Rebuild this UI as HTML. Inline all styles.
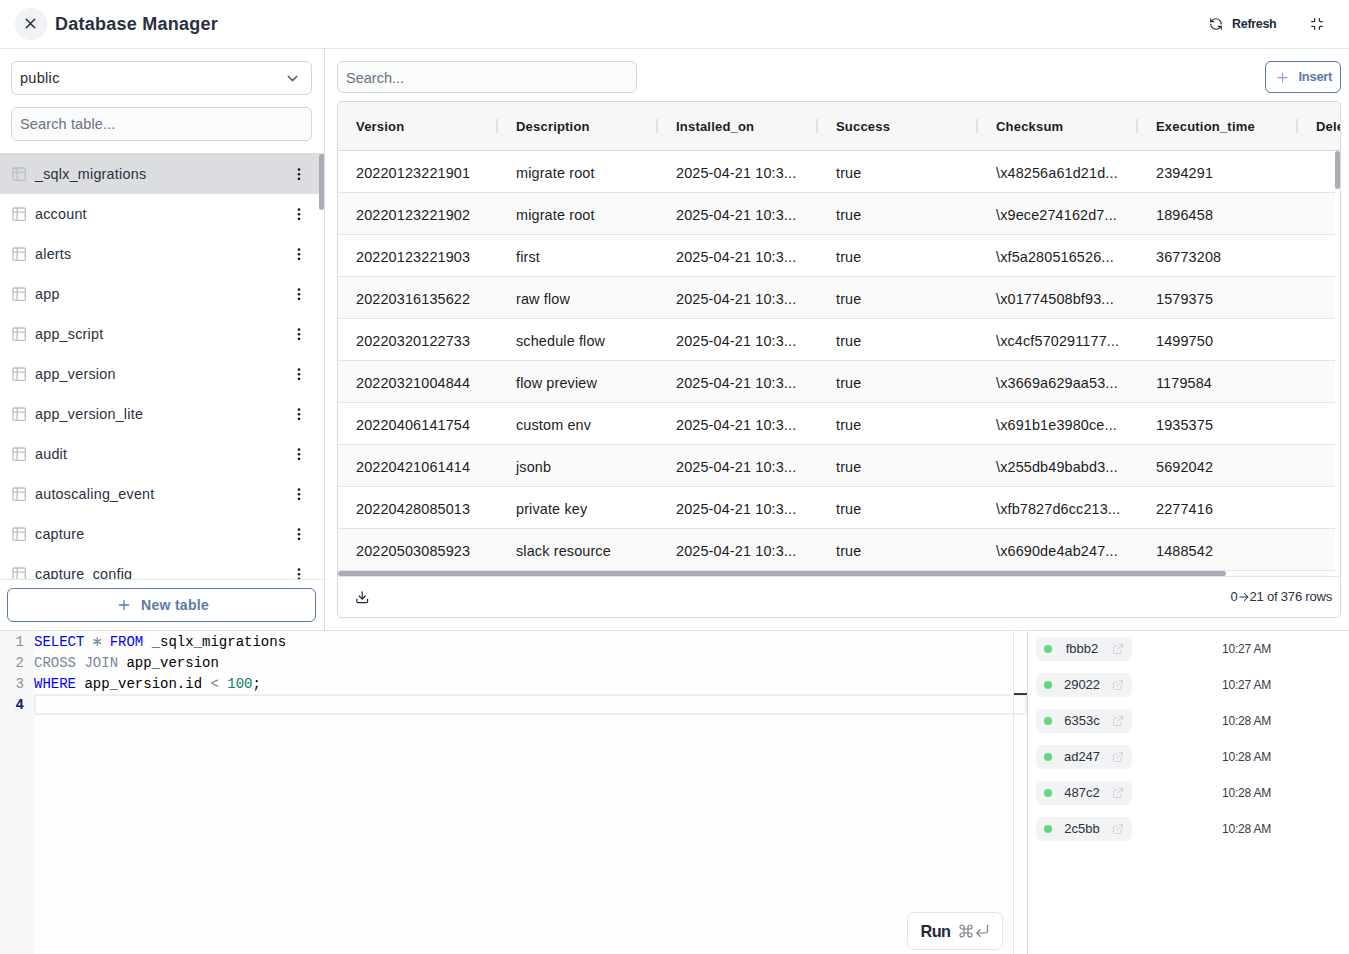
<!DOCTYPE html>
<html><head><meta charset="utf-8">
<style>
*{box-sizing:border-box;margin:0;padding:0}
html,body{width:1349px;height:954px;overflow:hidden;background:#fff;font-family:"Liberation Sans",sans-serif;color:#1f2937}
.a{position:absolute}
svg{display:block}
/* header */
#hdr{left:0;top:0;width:1349px;height:49px;border-bottom:1px solid #e4e6eb;background:#fff}
#close{left:15px;top:8px;width:32px;height:32px;border-radius:50%;background:#f1f2f4}
#title{left:55px;top:13px;font-size:18px;font-weight:bold;color:#283041;line-height:22px;white-space:nowrap;letter-spacing:0.25px}
#refresh{left:1232px;top:16px;font-size:12.5px;font-weight:bold;color:#222a3a;line-height:16px;letter-spacing:-0.3px}
/* sidebar */
#side{left:0;top:49px;width:325px;height:581px;border-right:1px solid #dcdcdc;background:#fff}
.inp{border:1px solid #d3d6dd;border-radius:6px;background:#fff}
#sel{left:11px;top:61px;width:301px;height:34px}
#selt{left:20px;top:69px;font-size:14.5px;color:#1f2937;line-height:18px;letter-spacing:0.3px}
#srch{left:11px;top:107px;width:301px;height:34px;background:#fafbfb}
#srcht{left:20px;top:115px;font-size:14.5px;color:#6b7280;line-height:18px;letter-spacing:0.13px}
.row{left:0;width:324px;height:40px}
.row .ic{position:absolute;left:11px;top:12.7px}
.row .nm{position:absolute;left:35px;top:12px;font-size:14.3px;color:#283041;line-height:18px;white-space:nowrap;letter-spacing:0.25px}
.row .kb{position:absolute;left:297px;top:15px}
#list{left:0;top:153px;width:324px;height:426px;overflow:hidden}
#listb{left:0;top:579px;width:324px;height:1px;background:#e5e7eb}
#newt{left:7px;top:588px;width:309px;height:34px;border:1px solid #5d79a8;border-radius:6px}
#newtt{left:118px;top:596px;font-size:14px;font-weight:bold;color:#5f7aa8;line-height:18px;white-space:nowrap;letter-spacing:0.3px}
/* main */
#tsrch{left:337px;top:61px;width:300px;height:32px;background:#fafbfb}
#tsrcht{left:346px;top:69px;font-size:14.5px;color:#6b7280;line-height:18px}
#ins{left:1265px;top:61px;width:76px;height:32px;border:1px solid #5d79a8;border-radius:6px}
#inst{left:1298.5px;top:69px;font-size:13px;font-weight:bold;color:#5f7aa8;line-height:16px;letter-spacing:-0.3px}
#tbl{left:337px;top:101px;width:1004px;height:517px;border:1px solid #d5d8df;border-radius:5px;overflow:hidden;background:#fff}
#thead{left:0;top:0;width:1004px;height:49px;background:#f7f7f8;border-bottom:1px solid #d5d8df}
.th{position:absolute;top:17px;font-size:13px;font-weight:bold;color:#1a1d23;line-height:16px;white-space:nowrap;letter-spacing:0.2px}
.sep{position:absolute;top:17px;width:2px;height:14px;background:#dde1ea}
.tr{position:absolute;left:0;width:997px;height:42px;border-bottom:1px solid #e1e4eb}
.tr.alt{background:#fafafa}
.td{position:absolute;top:13px;font-size:14.4px;color:#1a1d23;line-height:18px;white-space:nowrap;letter-spacing:0.15px}
/* bottom */
#bot{left:0;top:630px;width:1349px;height:1px;background:#e1e1e1}
#edit{left:0;top:631px;width:1027px;height:323px;background:#fefefe}
#gut{left:0;top:631px;width:34px;height:323px;background:#f7f8fa}
.ln{position:absolute;left:0;width:24px;text-align:right;font-family:"Liberation Mono",monospace;font-size:14px;line-height:21px;color:#999}
.code{position:absolute;left:34px;font-family:"Liberation Mono",monospace;font-size:14px;line-height:21px;color:#000;white-space:pre}
.kw{color:#0000ff}.g{color:#778899}.num{color:#098658}
#jobs{left:1028px;top:631px;width:321px;height:323px;background:#fff}
.pill{position:absolute;left:1036px;width:96px;height:24px;border-radius:7px;background:#f2f3f5}
.dot{position:absolute;left:8px;top:8px;width:8px;height:8px;border-radius:50%;background:#66d680}
.pt{position:absolute;left:16px;width:60px;text-align:center;top:4px;font-size:13px;color:#2a3140;line-height:16px}
.ext{position:absolute;left:76.2px;top:6px}
.tm{position:absolute;left:1222px;font-size:12px;color:#353c4a;line-height:16px;white-space:nowrap;letter-spacing:-0.2px}
</style></head><body>
<div id="hdr" class="a"></div>
<div id="close" class="a"><svg class="a" style="left:7.3px;top:7px" width="17" height="17" viewBox="0 0 24 24" fill="none" stroke="#222a3a" stroke-width="2" stroke-linecap="round"><path d="M18 6 6 18M6 6l12 12"/></svg></div>
<div id="title" class="a">Database Manager</div>
<svg class="a" style="left:1209px;top:17px" width="14" height="14" viewBox="0 0 24 24" fill="none" stroke="#222a3a" stroke-width="2" stroke-linecap="round" stroke-linejoin="round"><path d="M21 12a9 9 0 0 0-9-9 9.75 9.75 0 0 0-6.74 2.74L3 8"/><path d="M3 3v5h5"/><path d="M3 12a9 9 0 0 0 9 9 9.75 9.75 0 0 0 6.74-2.74L21 16"/><path d="M16 16h5v5"/></svg>
<div id="refresh" class="a">Refresh</div>
<svg class="a" style="left:1310px;top:17px" width="14" height="14" viewBox="0 0 24 24" fill="none" stroke="#222a3a" stroke-width="2.2" stroke-linecap="round" stroke-linejoin="round"><path d="M8 3v3a2 2 0 0 1-2 2H3"/><path d="M21 8h-3a2 2 0 0 1-2-2V3"/><path d="M3 16h3a2 2 0 0 1 2 2v3"/><path d="M16 21v-3a2 2 0 0 1 2-2h3"/></svg>

<div id="side" class="a"></div>
<div id="sel" class="a inp"></div>
<div id="selt" class="a">public</div>
<svg class="a" style="left:284px;top:70px" width="17" height="17" viewBox="0 0 24 24" fill="none" stroke="#5b6272" stroke-width="2" stroke-linecap="round" stroke-linejoin="round"><path d="m6 9 6 6 6-6"/></svg>
<div id="srch" class="a inp"></div>
<div id="srcht" class="a">Search table...</div>

<div id="list" class="a">
<div class="row a" style="top:0px;background:#dcdde1;height:41px;"><svg class="ic" width="16.4" height="16.4" viewBox="0 0 24 24" fill="none" stroke="#bcc0c8" stroke-width="2" stroke-linecap="round" stroke-linejoin="round"><rect x="3" y="3" width="18" height="18" rx="2"/><path d="M3 9h18M9 3v18"/></svg><div class="nm">_sqlx_migrations</div><svg class="kb" width="4" height="12" viewBox="0 0 4 12"><circle cx="2" cy="1.6" r="1.3" fill="#111827"/><circle cx="2" cy="6.2" r="1.3" fill="#111827"/><circle cx="2" cy="10.8" r="1.3" fill="#111827"/></svg></div>
<div class="row a" style="top:40px;"><svg class="ic" width="16.4" height="16.4" viewBox="0 0 24 24" fill="none" stroke="#bcc0c8" stroke-width="2" stroke-linecap="round" stroke-linejoin="round"><rect x="3" y="3" width="18" height="18" rx="2"/><path d="M3 9h18M9 3v18"/></svg><div class="nm">account</div><svg class="kb" width="4" height="12" viewBox="0 0 4 12"><circle cx="2" cy="1.6" r="1.3" fill="#111827"/><circle cx="2" cy="6.2" r="1.3" fill="#111827"/><circle cx="2" cy="10.8" r="1.3" fill="#111827"/></svg></div>
<div class="row a" style="top:80px;"><svg class="ic" width="16.4" height="16.4" viewBox="0 0 24 24" fill="none" stroke="#bcc0c8" stroke-width="2" stroke-linecap="round" stroke-linejoin="round"><rect x="3" y="3" width="18" height="18" rx="2"/><path d="M3 9h18M9 3v18"/></svg><div class="nm">alerts</div><svg class="kb" width="4" height="12" viewBox="0 0 4 12"><circle cx="2" cy="1.6" r="1.3" fill="#111827"/><circle cx="2" cy="6.2" r="1.3" fill="#111827"/><circle cx="2" cy="10.8" r="1.3" fill="#111827"/></svg></div>
<div class="row a" style="top:120px;"><svg class="ic" width="16.4" height="16.4" viewBox="0 0 24 24" fill="none" stroke="#bcc0c8" stroke-width="2" stroke-linecap="round" stroke-linejoin="round"><rect x="3" y="3" width="18" height="18" rx="2"/><path d="M3 9h18M9 3v18"/></svg><div class="nm">app</div><svg class="kb" width="4" height="12" viewBox="0 0 4 12"><circle cx="2" cy="1.6" r="1.3" fill="#111827"/><circle cx="2" cy="6.2" r="1.3" fill="#111827"/><circle cx="2" cy="10.8" r="1.3" fill="#111827"/></svg></div>
<div class="row a" style="top:160px;"><svg class="ic" width="16.4" height="16.4" viewBox="0 0 24 24" fill="none" stroke="#bcc0c8" stroke-width="2" stroke-linecap="round" stroke-linejoin="round"><rect x="3" y="3" width="18" height="18" rx="2"/><path d="M3 9h18M9 3v18"/></svg><div class="nm">app_script</div><svg class="kb" width="4" height="12" viewBox="0 0 4 12"><circle cx="2" cy="1.6" r="1.3" fill="#111827"/><circle cx="2" cy="6.2" r="1.3" fill="#111827"/><circle cx="2" cy="10.8" r="1.3" fill="#111827"/></svg></div>
<div class="row a" style="top:200px;"><svg class="ic" width="16.4" height="16.4" viewBox="0 0 24 24" fill="none" stroke="#bcc0c8" stroke-width="2" stroke-linecap="round" stroke-linejoin="round"><rect x="3" y="3" width="18" height="18" rx="2"/><path d="M3 9h18M9 3v18"/></svg><div class="nm">app_version</div><svg class="kb" width="4" height="12" viewBox="0 0 4 12"><circle cx="2" cy="1.6" r="1.3" fill="#111827"/><circle cx="2" cy="6.2" r="1.3" fill="#111827"/><circle cx="2" cy="10.8" r="1.3" fill="#111827"/></svg></div>
<div class="row a" style="top:240px;"><svg class="ic" width="16.4" height="16.4" viewBox="0 0 24 24" fill="none" stroke="#bcc0c8" stroke-width="2" stroke-linecap="round" stroke-linejoin="round"><rect x="3" y="3" width="18" height="18" rx="2"/><path d="M3 9h18M9 3v18"/></svg><div class="nm">app_version_lite</div><svg class="kb" width="4" height="12" viewBox="0 0 4 12"><circle cx="2" cy="1.6" r="1.3" fill="#111827"/><circle cx="2" cy="6.2" r="1.3" fill="#111827"/><circle cx="2" cy="10.8" r="1.3" fill="#111827"/></svg></div>
<div class="row a" style="top:280px;"><svg class="ic" width="16.4" height="16.4" viewBox="0 0 24 24" fill="none" stroke="#bcc0c8" stroke-width="2" stroke-linecap="round" stroke-linejoin="round"><rect x="3" y="3" width="18" height="18" rx="2"/><path d="M3 9h18M9 3v18"/></svg><div class="nm">audit</div><svg class="kb" width="4" height="12" viewBox="0 0 4 12"><circle cx="2" cy="1.6" r="1.3" fill="#111827"/><circle cx="2" cy="6.2" r="1.3" fill="#111827"/><circle cx="2" cy="10.8" r="1.3" fill="#111827"/></svg></div>
<div class="row a" style="top:320px;"><svg class="ic" width="16.4" height="16.4" viewBox="0 0 24 24" fill="none" stroke="#bcc0c8" stroke-width="2" stroke-linecap="round" stroke-linejoin="round"><rect x="3" y="3" width="18" height="18" rx="2"/><path d="M3 9h18M9 3v18"/></svg><div class="nm">autoscaling_event</div><svg class="kb" width="4" height="12" viewBox="0 0 4 12"><circle cx="2" cy="1.6" r="1.3" fill="#111827"/><circle cx="2" cy="6.2" r="1.3" fill="#111827"/><circle cx="2" cy="10.8" r="1.3" fill="#111827"/></svg></div>
<div class="row a" style="top:360px;"><svg class="ic" width="16.4" height="16.4" viewBox="0 0 24 24" fill="none" stroke="#bcc0c8" stroke-width="2" stroke-linecap="round" stroke-linejoin="round"><rect x="3" y="3" width="18" height="18" rx="2"/><path d="M3 9h18M9 3v18"/></svg><div class="nm">capture</div><svg class="kb" width="4" height="12" viewBox="0 0 4 12"><circle cx="2" cy="1.6" r="1.3" fill="#111827"/><circle cx="2" cy="6.2" r="1.3" fill="#111827"/><circle cx="2" cy="10.8" r="1.3" fill="#111827"/></svg></div>
<div class="row a" style="top:400px;"><svg class="ic" width="16.4" height="16.4" viewBox="0 0 24 24" fill="none" stroke="#bcc0c8" stroke-width="2" stroke-linecap="round" stroke-linejoin="round"><rect x="3" y="3" width="18" height="18" rx="2"/><path d="M3 9h18M9 3v18"/></svg><div class="nm">capture_config</div><svg class="kb" width="4" height="12" viewBox="0 0 4 12"><circle cx="2" cy="1.6" r="1.3" fill="#111827"/><circle cx="2" cy="6.2" r="1.3" fill="#111827"/><circle cx="2" cy="10.8" r="1.3" fill="#111827"/></svg></div>
</div>
<div class="a" style="left:319px;top:154px;width:5px;height:56px;border-radius:3px;background:#a8acb5"></div>
<div id="listb" class="a"></div>
<div id="newt" class="a"></div>
<svg class="a" style="left:116px;top:597px" width="16" height="16" viewBox="0 0 24 24" fill="none" stroke="#5f7aa8" stroke-width="2" stroke-linecap="round"><path d="M5 12h14M12 5v14"/></svg>
<div id="newtt" class="a" style="left:141px">New table</div>

<div id="tsrch" class="a inp"></div>
<div id="tsrcht" class="a">Search...</div>
<div id="ins" class="a"></div>
<svg class="a" style="left:1274.5px;top:69.5px" width="15" height="15" viewBox="0 0 24 24" fill="none" stroke="#8ea3c4" stroke-width="2" stroke-linecap="round"><path d="M5 12h14M12 5v14"/></svg>
<div id="inst" class="a">Insert</div>

<div id="tbl" class="a">
<div id="thead" class="a"></div>
<div class="th" style="left:18px">Version</div>
<div class="sep" style="left:158px"></div>
<div class="th" style="left:178px">Description</div>
<div class="sep" style="left:318px"></div>
<div class="th" style="left:338px">Installed_on</div>
<div class="sep" style="left:478px"></div>
<div class="th" style="left:498px">Success</div>
<div class="sep" style="left:638px"></div>
<div class="th" style="left:658px">Checksum</div>
<div class="sep" style="left:798px"></div>
<div class="th" style="left:818px">Execution_time</div>
<div class="sep" style="left:958px"></div>
<div class="th" style="left:978px">Deleted</div>
<div class="tr" style="top:49px"><div class="td" style="left:18px">20220123221901</div><div class="td" style="left:178px">migrate root</div><div class="td" style="left:338px">2025-04-21 10:3...</div><div class="td" style="left:498px">true</div><div class="td" style="left:658px">\x48256a61d21d...</div><div class="td" style="left:818px">2394291</div></div>
<div class="tr alt" style="top:91px"><div class="td" style="left:18px">20220123221902</div><div class="td" style="left:178px">migrate root</div><div class="td" style="left:338px">2025-04-21 10:3...</div><div class="td" style="left:498px">true</div><div class="td" style="left:658px">\x9ece274162d7...</div><div class="td" style="left:818px">1896458</div></div>
<div class="tr" style="top:133px"><div class="td" style="left:18px">20220123221903</div><div class="td" style="left:178px">first</div><div class="td" style="left:338px">2025-04-21 10:3...</div><div class="td" style="left:498px">true</div><div class="td" style="left:658px">\xf5a280516526...</div><div class="td" style="left:818px">36773208</div></div>
<div class="tr alt" style="top:175px"><div class="td" style="left:18px">20220316135622</div><div class="td" style="left:178px">raw flow</div><div class="td" style="left:338px">2025-04-21 10:3...</div><div class="td" style="left:498px">true</div><div class="td" style="left:658px">\x01774508bf93...</div><div class="td" style="left:818px">1579375</div></div>
<div class="tr" style="top:217px"><div class="td" style="left:18px">20220320122733</div><div class="td" style="left:178px">schedule flow</div><div class="td" style="left:338px">2025-04-21 10:3...</div><div class="td" style="left:498px">true</div><div class="td" style="left:658px">\xc4cf570291177...</div><div class="td" style="left:818px">1499750</div></div>
<div class="tr alt" style="top:259px"><div class="td" style="left:18px">20220321004844</div><div class="td" style="left:178px">flow preview</div><div class="td" style="left:338px">2025-04-21 10:3...</div><div class="td" style="left:498px">true</div><div class="td" style="left:658px">\x3669a629aa53...</div><div class="td" style="left:818px">1179584</div></div>
<div class="tr" style="top:301px"><div class="td" style="left:18px">20220406141754</div><div class="td" style="left:178px">custom env</div><div class="td" style="left:338px">2025-04-21 10:3...</div><div class="td" style="left:498px">true</div><div class="td" style="left:658px">\x691b1e3980ce...</div><div class="td" style="left:818px">1935375</div></div>
<div class="tr alt" style="top:343px"><div class="td" style="left:18px">20220421061414</div><div class="td" style="left:178px">jsonb</div><div class="td" style="left:338px">2025-04-21 10:3...</div><div class="td" style="left:498px">true</div><div class="td" style="left:658px">\x255db49babd3...</div><div class="td" style="left:818px">5692042</div></div>
<div class="tr" style="top:385px"><div class="td" style="left:18px">20220428085013</div><div class="td" style="left:178px">private key</div><div class="td" style="left:338px">2025-04-21 10:3...</div><div class="td" style="left:498px">true</div><div class="td" style="left:658px">\xfb7827d6cc213...</div><div class="td" style="left:818px">2277416</div></div>
<div class="tr alt" style="top:427px"><div class="td" style="left:18px">20220503085923</div><div class="td" style="left:178px">slack resource</div><div class="td" style="left:338px">2025-04-21 10:3...</div><div class="td" style="left:498px">true</div><div class="td" style="left:658px">\x6690de4ab247...</div><div class="td" style="left:818px">1488542</div></div>
<div class="a" style="left:997px;top:49px;width:5px;height:38px;border-radius:3px;background:#a8acb5"></div>
<div class="a" style="left:0;top:469px;width:888px;height:5px;border-radius:3px;background:#a8acb5"></div>
<div class="a" style="left:0;top:474px;width:1004px;height:1px;background:#e1e4eb"></div>
<svg class="a" style="left:16.8px;top:487.8px" width="14.4" height="14.4" viewBox="0 0 24 24" fill="none" stroke="#222a3a" stroke-width="2" stroke-linecap="round" stroke-linejoin="round"><path d="M12 3v12"/><path d="m7 10 5 5 5-5"/><path d="M3 15v4a2 2 0 0 0 2 2h14a2 2 0 0 0 2-2v-4"/></svg>
<div class="a" style="right:8px;top:487px;font-size:13px;color:#2a3140;line-height:16px;white-space:nowrap;display:flex;align-items:center;letter-spacing:-0.2px"><span>0</span><svg style="margin:0 1px 0 1px" width="10" height="10" viewBox="0 0 10 10" fill="none" stroke="#2a3140" stroke-width="1.05" stroke-linecap="round" stroke-linejoin="round"><path d="M0.8 5H9M5.5 1.5L9 5L5.5 8.5"/></svg><span>21 of 376 rows</span></div>
</div>

<div id="bot" class="a"></div>
<div id="edit" class="a"></div>
<div id="gut" class="a"></div>
<div class="ln" style="top:632px;color:#8f8f8f">1</div>
<div class="code" style="top:632px"><span class="kw">SELECT</span>   <span class="kw">FROM</span> _sqlx_migrations</div>
<div class="ln" style="top:653px;color:#8f8f8f">2</div>
<div class="code" style="top:653px"><span class="g">CROSS</span> <span class="g">JOIN</span> app_version</div>
<div class="ln" style="top:674px;color:#8f8f8f">3</div>
<div class="code" style="top:674px"><span class="kw">WHERE</span> app_version.id <span class="g">&lt;</span> <span class="num">100</span>;</div>
<div class="ln" style="top:695px;color:#0b216f;font-weight:bold">4</div>
<div class="code" style="top:695px"></div>
<svg class="a" style="left:90px;top:634px" width="14" height="14" viewBox="90 634 14 14" fill="none" stroke="#778899" stroke-width="1.3" stroke-linecap="round"><path d="M97.3 637.7V645.3M94 639.6L100.6 643.4M94 643.4L100.6 639.6"/></svg>
<div class="a" style="left:34px;top:694px;width:993px;height:21px;border:2px solid #eeeeee"></div>
<div class="a" style="left:1013px;top:631px;width:1px;height:323px;background:#e6e6e6"></div>
<div class="a" style="left:1027px;top:631px;width:1px;height:323px;background:#dcdcdc"></div>
<div class="a" style="left:1014px;top:693px;width:13px;height:2px;background:#383838"></div>
<div class="a" style="left:907px;top:912px;width:96px;height:38px;border:1px solid #e3e5ea;border-radius:7px;background:#fff"></div>
<div class="a" style="left:920.5px;top:922px;font-size:16.3px;font-weight:bold;color:#222a3a;line-height:18px;letter-spacing:-0.6px">Run</div>
<svg class="a" style="left:959.3px;top:924.2px" width="14" height="14" viewBox="-1 -1 14 14" fill="none" stroke="#777d8a" stroke-width="1.2"><path d="M4 4V2A2 2 0 1 0 2 4H10A2 2 0 1 0 8 2V10A2 2 0 1 0 10 8H2A2 2 0 1 0 4 10Z"/></svg>
<svg class="a" style="left:974px;top:922px" width="16" height="16" viewBox="974 922 16 16" fill="none" stroke="#777d8a" stroke-width="1.2" stroke-linecap="round" stroke-linejoin="round"><path d="M987.5 925.3V931.3Q987.5 933 985.8 933H977M980.2 929.6L976.8 933L980.2 936.4"/></svg>
<div id="jobs" class="a"></div>
<div class="pill" style="top:637px"><div class="dot"></div><div class="pt">fbbb2</div><svg class="ext" width="12" height="12" viewBox="0 0 24 24" fill="none" stroke="#cfd2d8" stroke-width="2" stroke-linecap="round" stroke-linejoin="round"><path d="M15 3h6v6"/><path d="M10 14 21 3"/><path d="M18 13v6a2 2 0 0 1-2 2H5a2 2 0 0 1-2-2V8a2 2 0 0 1 2-2h6"/></svg></div>
<div class="tm" style="top:641px">10:27 AM</div>
<div class="pill" style="top:673px"><div class="dot"></div><div class="pt">29022</div><svg class="ext" width="12" height="12" viewBox="0 0 24 24" fill="none" stroke="#cfd2d8" stroke-width="2" stroke-linecap="round" stroke-linejoin="round"><path d="M15 3h6v6"/><path d="M10 14 21 3"/><path d="M18 13v6a2 2 0 0 1-2 2H5a2 2 0 0 1-2-2V8a2 2 0 0 1 2-2h6"/></svg></div>
<div class="tm" style="top:677px">10:27 AM</div>
<div class="pill" style="top:709px"><div class="dot"></div><div class="pt">6353c</div><svg class="ext" width="12" height="12" viewBox="0 0 24 24" fill="none" stroke="#cfd2d8" stroke-width="2" stroke-linecap="round" stroke-linejoin="round"><path d="M15 3h6v6"/><path d="M10 14 21 3"/><path d="M18 13v6a2 2 0 0 1-2 2H5a2 2 0 0 1-2-2V8a2 2 0 0 1 2-2h6"/></svg></div>
<div class="tm" style="top:713px">10:28 AM</div>
<div class="pill" style="top:745px"><div class="dot"></div><div class="pt">ad247</div><svg class="ext" width="12" height="12" viewBox="0 0 24 24" fill="none" stroke="#cfd2d8" stroke-width="2" stroke-linecap="round" stroke-linejoin="round"><path d="M15 3h6v6"/><path d="M10 14 21 3"/><path d="M18 13v6a2 2 0 0 1-2 2H5a2 2 0 0 1-2-2V8a2 2 0 0 1 2-2h6"/></svg></div>
<div class="tm" style="top:749px">10:28 AM</div>
<div class="pill" style="top:781px"><div class="dot"></div><div class="pt">487c2</div><svg class="ext" width="12" height="12" viewBox="0 0 24 24" fill="none" stroke="#cfd2d8" stroke-width="2" stroke-linecap="round" stroke-linejoin="round"><path d="M15 3h6v6"/><path d="M10 14 21 3"/><path d="M18 13v6a2 2 0 0 1-2 2H5a2 2 0 0 1-2-2V8a2 2 0 0 1 2-2h6"/></svg></div>
<div class="tm" style="top:785px">10:28 AM</div>
<div class="pill" style="top:817px"><div class="dot"></div><div class="pt">2c5bb</div><svg class="ext" width="12" height="12" viewBox="0 0 24 24" fill="none" stroke="#cfd2d8" stroke-width="2" stroke-linecap="round" stroke-linejoin="round"><path d="M15 3h6v6"/><path d="M10 14 21 3"/><path d="M18 13v6a2 2 0 0 1-2 2H5a2 2 0 0 1-2-2V8a2 2 0 0 1 2-2h6"/></svg></div>
<div class="tm" style="top:821px">10:28 AM</div>
</body></html>
